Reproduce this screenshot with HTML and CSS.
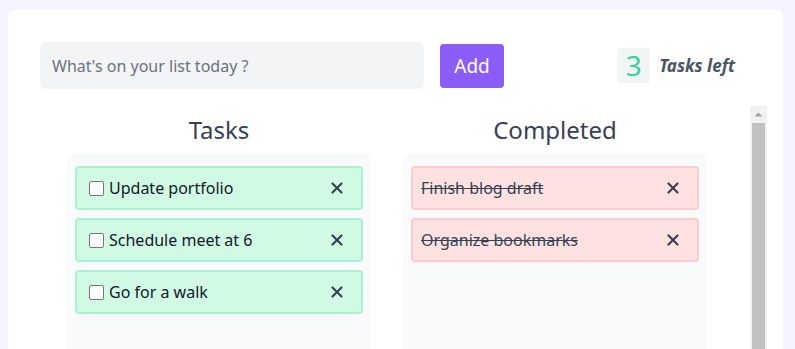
FILE: index.html
```html
<!DOCTYPE html>
<html>
<head>
    <link rel="stylesheet" href="styles.css">
    <title>Todo</title>
</head>
<body>
    <div class="card">
        <div class="top-row">
            <input type="text" class="task-input" placeholder="What's on your list today ?">
            <button class="add-button">Add</button>
            <div class="counter">
                <span class="count">3</span>
                <span class="count-label">Tasks left</span>
            </div>
        </div>
        <div class="lists">
            <div class="columns">
                <div class="column">
                    <h2>Tasks</h2>
                    <div class="panel">
                        <div class="item todo">
                            <label><input type="checkbox">Update portfolio</label>
                            <button class="remove"><svg width="12" height="12" viewBox="0 0 12 12"><path d="M1.5 1.5L10.5 10.5M10.5 1.5L1.5 10.5" stroke="#374151" stroke-width="2.2" stroke-linecap="round"/></svg></button>
                        </div>
                        <div class="item todo">
                            <label><input type="checkbox">Schedule meet at 6</label>
                            <button class="remove"><svg width="12" height="12" viewBox="0 0 12 12"><path d="M1.5 1.5L10.5 10.5M10.5 1.5L1.5 10.5" stroke="#374151" stroke-width="2.2" stroke-linecap="round"/></svg></button>
                        </div>
                        <div class="item todo">
                            <label><input type="checkbox">Go for a walk</label>
                            <button class="remove"><svg width="12" height="12" viewBox="0 0 12 12"><path d="M1.5 1.5L10.5 10.5M10.5 1.5L1.5 10.5" stroke="#374151" stroke-width="2.2" stroke-linecap="round"/></svg></button>
                        </div>
                    </div>
                </div>
                <div class="column">
                    <h2>Completed</h2>
                    <div class="panel">
                        <div class="item done">
                            <span>Finish blog draft</span>
                            <button class="remove"><svg width="12" height="12" viewBox="0 0 12 12"><path d="M1.5 1.5L10.5 10.5M10.5 1.5L1.5 10.5" stroke="#374151" stroke-width="2.2" stroke-linecap="round"/></svg></button>
                        </div>
                        <div class="item done">
                            <span>Organize bookmarks</span>
                            <button class="remove"><svg width="12" height="12" viewBox="0 0 12 12"><path d="M1.5 1.5L10.5 10.5M10.5 1.5L1.5 10.5" stroke="#374151" stroke-width="2.2" stroke-linecap="round"/></svg></button>
                        </div>
                    </div>
                </div>
            </div>
            <div class="scrollbar">
                <div class="scroll-up">
                    <svg width="9" height="5" viewBox="0 0 9 5"><path d="M0.5 4.5L4.5 0.5L8.5 4.5Z" fill="#a3a3a3"/></svg>
                </div>
                <div class="scroll-thumb"></div>
            </div>
        </div>
    </div>
</body>
</html>
```

FILE: styles.css
```css
html, body {
    overflow: hidden;
}

body {
    margin: 0;
    padding: 10px 12px 0 8px;
    background-color: #f5f3ff;
    font-family: "Noto Sans", Arial, sans-serif;
    color: #1f2937;
}

.card {
    background-color: #fff;
    border-radius: 6px;
    padding: 32px 16px 0 32px;
}

.top-row {
    display: flex;
    align-items: center;
    padding-right: 32px;
}

.task-input {
    width: 384px;
    height: 47px;
    box-sizing: border-box;
    border: none;
    border-radius: 6px;
    background-color: #f3f4f6;
    padding: 0 12px;
    font-family: inherit;
    font-size: 16px;
    outline: none;
}

.task-input::placeholder {
    color: #6b7280;
}

.add-button {
    margin-left: 16px;
    width: 64px;
    height: 44px;
    border: none;
    border-radius: 4px;
    background-color: #8b5cf6;
    color: #fff;
    font-family: inherit;
    font-size: 19px;
    cursor: pointer;
}

.counter {
    margin-left: auto;
    display: flex;
    align-items: center;
}

.count {
    width: 33px;
    height: 35px;
    border-radius: 4px;
    background-color: #f3f4f6;
    color: #34d399;
    font-size: 28px;
    line-height: 35px;
    text-align: center;
}

.count-label {
    margin-left: 9px;
    font-size: 17px;
    font-weight: bold;
    font-style: italic;
    color: #4b5563;
}

.lists {
    margin-top: 17px;
    height: 300px;
    overflow: hidden;
    display: flex;
}

.columns {
    flex: 1;
    display: grid;
    grid-template-columns: 304px 304px;
    align-content: start;
    gap: 32px;
    padding-left: 27px;
}

.scrollbar {
    width: 17px;
    background-color: #f1f1f1;
    display: flex;
    flex-direction: column;
}

.scroll-up {
    height: 17px;
    display: flex;
    align-items: center;
    justify-content: center;
}

.scroll-thumb {
    flex: 1;
    margin: 0 2px;
    background-color: #c1c1c1;
}

.column h2 {
    margin: 8px 0 8px;
    font-size: 24px;
    font-weight: normal;
    line-height: 32px;
    text-align: center;
    color: #374151;
}

.panel {
    background-color: #f9fafb;
    border-radius: 6px;
    padding: 12px 8px;
    min-height: 300px;
    display: flex;
    flex-direction: column;
    gap: 8px;
}

.item {
    display: flex;
    align-items: center;
    justify-content: space-between;
    height: 44px;
    box-sizing: border-box;
    padding: 0 18px 0 8px;
    border: 2px solid;
    border-radius: 4px;
    font-size: 16px;
}

.item label {
    display: flex;
    align-items: center;
}

.item input[type="checkbox"] {
    appearance: none;
    width: 15px;
    height: 15px;
    margin: 0 5px 0 4px;
    border: 1px solid #767676;
    border-radius: 2px;
    background-color: #fff;
}

.todo {
    background-color: #d1fae5;
    border-color: #a7f3d0;
    color: #111827;
}

.done {
    background-color: #fee2e2;
    border-color: #fecaca;
    color: #374151;
    text-decoration: line-through;
}

.remove {
    border: none;
    background: none;
    padding: 0;
    display: flex;
    cursor: pointer;
}
```
